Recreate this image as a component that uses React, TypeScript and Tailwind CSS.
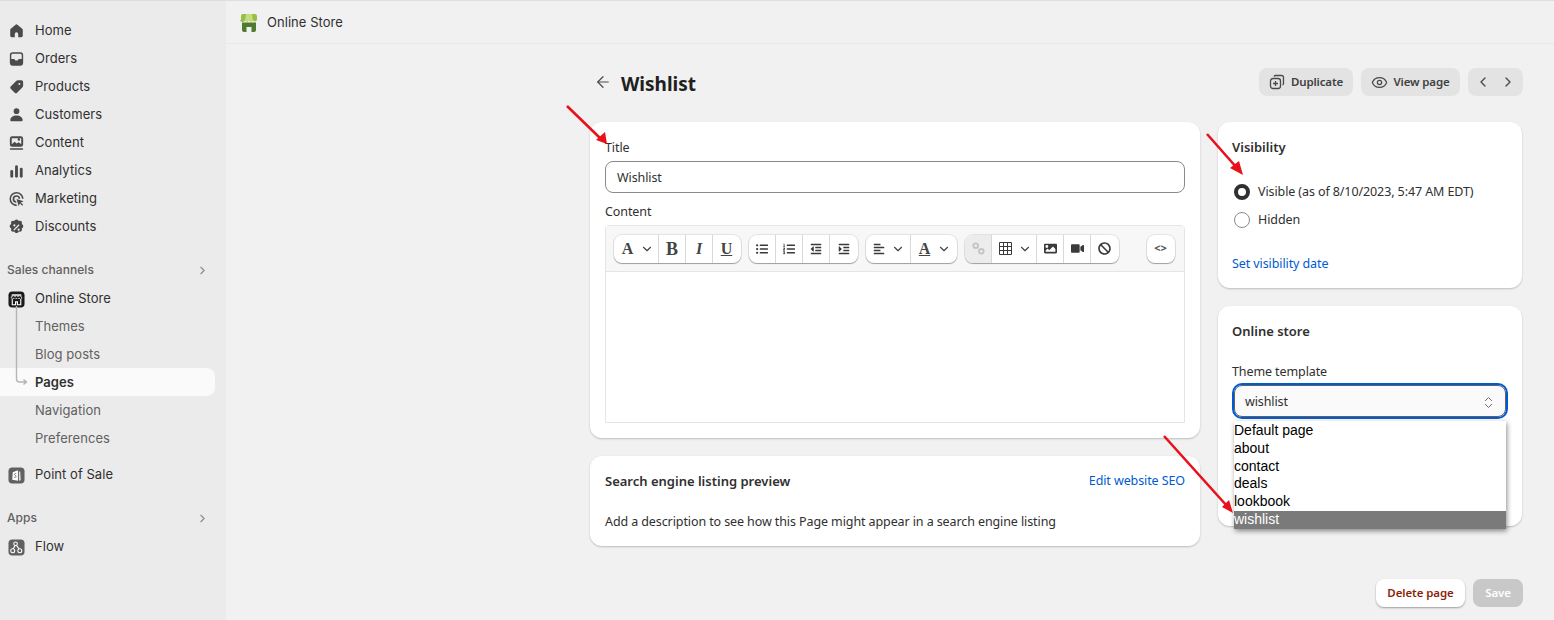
import type { ReactNode } from 'react';
import { ChevronRight, ChevronLeft, ArrowLeft, ChevronDown, ChevronsUpDown, Eye } from 'lucide-react';
import { FaListUl, FaListOl, FaOutdent, FaIndent, FaAlignLeft, FaImage, FaVideo, FaBan } from 'react-icons/fa';

// sidebar icons, 20x20 box
const icons: Record<string, ReactNode> = {
    Home: <path d="M9 3.400a1.600 1.600 0 0 1 2 0l5 4.200c.4.3.6.8.6 1.300v6.100a1.500 1.500 0 0 1-1.500 1.500h-3.300v-3.300a1.800 1.800 0 0 0-3.600 0v3.300h-3.300a1.500 1.500 0 0 1-1.500-1.500v-6.100c0-.5.2-1 .6-1.300z" />,
    Orders: <path fillRule="evenodd" d="M6 3h8a3 3 0 0 1 3 3v8a3 3 0 0 1-3 3h-8a3 3 0 0 1-3-3v-8a3 3 0 0 1 3-3zm-1.500 7h2.800c.5 0 .8.300 1 .7.200.6.800 1 1.700 1s1.500-.4 1.700-1c.2-.4.5-.7 1-.7h2.800v-4c0-.8-.7-1.500-1.500-1.500h-8c-.8 0-1.500.7-1.500 1.500z" />,
    Products: <path fillRule="evenodd" d="M11.500 3h3.700a1.800 1.800 0 0 1 1.800 1.800v3.700c0 .8-.3 1.500-.9 2.100l-5.500 5.500a1.800 1.800 0 0 1-2.500 0l-4.200-4.200a1.800 1.800 0 0 1 0-2.500l5.500-5.500c.6-.6 1.300-.9 2.100-.9zm1.500 4.800a1 1 0 1 0 0-2 1 1 0 0 0 0 2z" />,
    Customers: <><circle cx="10" cy="6" r="3" /><path d="M3.500 15.200c0-2.600 2.900-4.700 6.500-4.700s6.500 2.100 6.500 4.700c0 .8-.6 1.300-1.300 1.300h-10.400c-.7 0-1.300-.5-1.300-1.300z" /></>,
    Content: <><path fillRule="evenodd" d="M5.500 3h9a2.500 2.500 0 0 1 2.500 2.500v6a2.500 2.500 0 0 1-2.500 2.500h-9a2.500 2.500 0 0 1-2.500-2.500v-6a2.500 2.500 0 0 1 2.500-2.500zm-.5 8.200 3-2.400 2.200 1.800 2.100-1.500 2.700 2.100v-6.200h-10zm7.500-3.700a1.300 1.300 0 1 0 0-2.600 1.300 1.300 0 0 0 0 2.600z" /><rect x="3" y="15.500" width="14" height="1.500" rx=".7" /></>,
    Analytics: <><rect x="3.500" y="9" width="3" height="8" rx="1.500" /><rect x="8.500" y="4" width="3" height="13" rx="1.500" /><rect x="13.500" y="6.500" width="3" height="10.500" rx="1.500" /></>,
    Marketing: <><path d="M10 2.500a7.500 7.500 0 0 1 7.500 7.300h-1.700a5.800 5.800 0 1 0-5.600 6v1.700a7.500 7.500 0 1 1-.2-15z" /><path d="M10 6a4 4 0 0 1 4 3.800h-1.700a2.300 2.300 0 1 0-2.500 2.500v1.700a4 4 0 0 1 .2-8z" /><path d="M10 10l7.500 2.300-2.900 1.300 2.400 2.400-1 1-2.400-2.400-1.300 2.900z" /></>,
};

function NavIcon({ name }: { name: string }) {
    if (name === 'Discounts') {
        return (
            <svg viewBox="2 2 16 16" className="w-[17px] h-[17px]">
                <path className="fill-[#4a4a4a]" d="M8.600 3c.7-.8 2.100-.8 2.800 0l.8.800 1.100-.1c1-.1 1.900.8 1.800 1.800l-.1 1.100.8.800c.8.700.8 2.100 0 2.800l-.8.800.1 1.100c.1 1-.8 1.900-1.800 1.800l-1.100-.1-.8.800c-.7.800-2.100.8-2.800 0l-.8-.8-1.100.1c-1 .1-1.900-.8-1.800-1.800l.1-1.100-.8-.8c-.8-.7-.8-2.100 0-2.800l.8-.8-.1-1.100c-.1-1 .8-1.900 1.800-1.800l1.100.1z" />
                <path d="M12 7l.9.900-5 5-.9-.9z" fill="#ebebeb" />
                <circle cx="8" cy="8" r="1" fill="#ebebeb" />
                <circle cx="12" cy="12" r="1" fill="#ebebeb" />
            </svg>
        );
    }
    return (
        <svg viewBox="0 0 20 20" className="w-5 h-5 fill-[#4a4a4a]">{icons[name]}</svg>
    );
}

function StoreIcon() {
    return (
        <svg viewBox="0 0 18 18" className="w-[17px] h-[17px]">
            <rect x="0.500" y="0.500" width="17" height="17" rx="4" fill="#1a1a1a" />
            <path d="M4 3.500h10v1.500h-10z" fill="#fff" />
            <path d="M3.500 5.500h11v2.300h-11z" fill="none" stroke="#fff" strokeWidth="0.900" strokeDasharray="2 1" />
            <path d="M4.500 8.500v6h3.500v-3h2v3h3.500v-6" fill="none" stroke="#fff" strokeWidth="1.200" />
        </svg>
    );
}

function PosIcon() {
    return (
        <svg viewBox="0 0 18 18" className="w-[17px] h-[17px]">
            <rect x="0.500" y="0.500" width="17" height="17" rx="4" fill="#616161" />
            <path d="M5 5.500 10.500 3.500v11l-6-1z" fill="#fff" />
            <path d="M11.500 4.500l1.500 .5.500 9-2 .5z" fill="#ddd" />
            <path d="M8.700 7c-1.300-.4-2 .4-1.800 1.100.2.800 1.700.9 1.700 1.900 0 .8-1 1.200-2 .7" stroke="#616161" strokeWidth="0.900" fill="none" />
        </svg>
    );
}

function FlowIcon() {
    return (
        <svg viewBox="0 0 18 18" className="w-[17px] h-[17px]">
            <rect x="0.500" y="0.500" width="17" height="17" rx="4" fill="#616161" />
            <g fill="none" stroke="#fff" strokeWidth="1.100">
                <circle cx="8" cy="5" r="1.900" />
                <circle cx="5" cy="12.500" r="2.100" />
                <circle cx="12.500" cy="12.500" r="2.100" />
                <path d="M7.500 7 5.500 10.300M9 6.800l2.700 3.700" />
            </g>
        </svg>
    );
}

function NavRow({ label, icon }: { label: string; icon: ReactNode }) {
    return (
        <div className="h-7 pt-[2px] flex items-center pl-[7px] gap-[9px]">
            <span className="w-[19px] flex justify-center">{icon}</span>
            <span className="text-[#303030]">{label}</span>
        </div>
    );
}

function SectionLabel({ label }: { label: string }) {
    return (
        <div className="h-7 pt-[2px] flex items-center justify-between pl-[7px] pr-[6px] text-xs font-medium text-[#616161]">
            <span>{label}</span>
            <ChevronRight size={13} className="text-[#8a8a8a]" />
        </div>
    );
}

function Sidebar() {
    const main = ['Home', 'Orders', 'Products', 'Customers', 'Content', 'Analytics', 'Marketing', 'Discounts'];
    return (
        <aside className="w-[226px] shrink-0 h-full bg-[#ebebeb] border-t border-[#dedede] pt-[15px] pr-[11px] text-[13px] tracking-[0.05px] [font-family:Inter,sans-serif]">
            {main.map(m => <NavRow key={m} label={m} icon={<NavIcon name={m} />} />)}
            <div className="mt-[15px]"><SectionLabel label="Sales channels" /></div>
            <div className="relative mt-[1px]">
                <NavRow label="Online Store" icon={<StoreIcon />} />
                <div className="pl-[35px] text-[#616161]">
                    <div className="h-7 pt-[2px] flex items-center">Themes</div>
                    <div className="h-7 pt-[2px] flex items-center">Blog posts</div>
                    <div className="h-7 pt-[2px] flex items-center -ml-[35px] pl-[35px] bg-[#fafafa] rounded-r-lg font-semibold text-[#303030]">Pages</div>
                    <div className="h-7 pt-[2px] flex items-center">Navigation</div>
                    <div className="h-7 pt-[2px] flex items-center">Preferences</div>
                </div>
                {/* tree line */}
                <svg viewBox="0 0 20 80" className="absolute left-[8px] top-[22px] w-5 h-20 fill-none stroke-[#b5b5b5] stroke-[1.400]">
                    <path d="M8.500 0V73a3 3 0 0 0 3 3h7M15.500 73.500l3 2.500-3 2.500" />
                </svg>
            </div>
            <div className="mt-[8px]"><NavRow label="Point of Sale" icon={<PosIcon />} /></div>
            <div className="mt-[15px]"><SectionLabel label="Apps" /></div>
            <div className="mt-[1px]"><NavRow label="Flow" icon={<FlowIcon />} /></div>
        </aside>
    );
}

function Card({ children, className = '' }: { children: ReactNode; className?: string }) {
    return (
        <div className={`bg-white rounded-xl shadow-[0_1px_2px_rgba(0,0,0,0.22)] ${className}`}>{children}</div>
    );
}

function ToolBtn({ children, wide, muted }: { children: ReactNode; wide?: boolean; muted?: boolean }) {
    return (
        <div className={`h-full flex items-center border-r border-[#d8d8d8] last:border-r-0 ${wide ? 'w-[45px] gap-[6px] pl-[7px]' : 'w-[27px] justify-center'} ${muted ? 'bg-[#ececec]' : 'text-[#3a3a3a]'}`}>
            {children}
        </div>
    );
}

function ToolGroup({ children, className = '' }: { children: ReactNode; className?: string }) {
    return (
        <div className={`h-[28px] flex pr-px bg-white rounded-lg overflow-hidden shadow-[0_1px_1px_rgba(0,0,0,0.3),0_0_0_1px_rgba(0,0,0,0.08)] ${className}`}>{children}</div>
    );
}

const Caret = () => <ChevronDown size={14} className="text-[#444] shrink-0" />;

// the editor's serif letter buttons
function Letter({ children, className = '' }: { children: ReactNode; className?: string }) {
    return (
        <span className={`w-[13px] text-center text-[16px] leading-none font-bold text-[#444] [font-family:'Liberation_Serif',serif] ${className}`}>{children}</span>
    );
}

function Toolbar() {
    return (
        <div className="h-[46px] shrink-0 flex items-center gap-2 pl-[8px] pr-[9px] bg-[#f7f7f7] border-b border-[#e5e5e5]">
            <ToolGroup>
                <ToolBtn wide><Letter>A</Letter><Caret /></ToolBtn>
                <ToolBtn><Letter className="text-[18px]">B</Letter></ToolBtn>
                <ToolBtn><Letter className="italic">I</Letter></ToolBtn>
                <ToolBtn><Letter className="underline text-[15px]">U</Letter></ToolBtn>
            </ToolGroup>
            <ToolGroup>
                <ToolBtn><FaListUl size={12} /></ToolBtn>
                <ToolBtn><FaListOl size={12} /></ToolBtn>
                <ToolBtn><FaOutdent size={12} /></ToolBtn>
                <ToolBtn><FaIndent size={12} /></ToolBtn>
            </ToolGroup>
            <ToolGroup>
                <ToolBtn wide><FaAlignLeft size={12} className="shrink-0" /><Caret /></ToolBtn>
                <ToolBtn wide><Letter className="underline text-[14px]">A</Letter><Caret /></ToolBtn>
            </ToolGroup>
            <ToolGroup>
                <ToolBtn muted>
                    <svg viewBox="0 0 14 14" className="w-[13px] h-[13px] fill-none stroke-[#c4c4c4] stroke-2">
                        <circle cx="4" cy="4" r="2.500" />
                        <circle cx="10" cy="10" r="2.500" />
                    </svg>
                </ToolBtn>
                <ToolBtn wide>
                    <svg viewBox="0 0 13 13" className="w-[13px] h-[13px] shrink-0 fill-none stroke-[#3a3a3a]">
                        <path d="M.5.5h12v12h-12zM.5 4.500h12M.5 8.500h12M4.500.5v12M8.500.5v12" />
                    </svg>
                    <Caret />
                </ToolBtn>
                <ToolBtn><FaImage size={13} /></ToolBtn>
                <ToolBtn><FaVideo size={13} /></ToolBtn>
                <ToolBtn><FaBan size={13} /></ToolBtn>
            </ToolGroup>
            <ToolGroup className="ml-auto">
                <div className="w-[27px] flex items-center justify-center text-[11px] font-bold text-[#555]">{'<>'}</div>
            </ToolGroup>
        </div>
    );
}

function Radio({ checked, label }: { checked?: boolean; label: string }) {
    return (
        <div className="h-7 pt-[2px] flex items-center gap-2 pl-[2px]">
            {checked
                ? <span className="w-4 h-4 rounded-full border-[4.5px] border-[#303030] bg-white" />
                : <span className="w-4 h-4 rounded-full border border-[#8a8a8a] bg-white" />}
            <span>{label}</span>
        </div>
    );
}

const options = ['Default page', 'about', 'contact', 'deals', 'lookbook', 'wishlist'];

function Content() {
    return (
        <main className="flex-1 min-w-0 h-full flex flex-col bg-[#f1f1f1] text-[12.5px] tracking-[-0.1px] text-[#303030] [font-family:'Noto_Sans',sans-serif]">
            <header className="h-[44px] shrink-0 flex items-center gap-[9px] pt-[2px] pl-[14px] border-t border-t-[#dedede] border-b border-b-[#e8e8e8] text-[13px] tracking-[0.05px] [font-family:Inter,sans-serif]">
                <svg viewBox="0 0 18 20" className="w-[18px] h-5">
                    <path d="M1 7V3a2 2 0 0 1 2-2h12a2 2 0 0 1 2 2v4a2.700 2.700 0 0 1-4 .6 2.700 2.700 0 0 1-4 0 2.700 2.700 0 0 1-4 0 2.700 2.700 0 0 1-5-.6z" fill="#95bf47" />
                    <path d="M6 1h6l1 7h-8z" fill="#c3de7c" />
                    <path d="M2 9.500h14V17a2 2 0 0 1-2 2h-2.500v-5h-5v5H4a2 2 0 0 1-2-2z" fill="#4f7a2f" />
                </svg>
                <span>Online Store</span>
            </header>

            <div className="flex-1 pl-[364px] pr-[31px] pt-6">
                <div className="h-7 flex items-center justify-between">
                    <div className="flex items-center gap-[9px] pl-[4px]">
                        <ArrowLeft size={18} className="text-[#4a4a4a]" strokeWidth={1.6} />
                        <h1 className="mt-[4px] text-[19px] tracking-normal font-bold text-[#202020]">Wishlist</h1>
                    </div>
                    <div className="flex gap-2 text-[11.5px] tracking-[-0.15px] font-semibold text-[#404040]">
                        <div className="w-[94px] h-7 rounded-lg bg-[#e3e3e3] flex items-center justify-center gap-[6px]">
                            <svg viewBox="0 0 16 16" className="w-4 h-4 fill-none stroke-[#4a4a4a] stroke-[1.300]">
                                <rect x="1.500" y="4.500" width="10" height="10" rx="2.500" />
                                <path d="M5 2.500c.3-.7 1-1 1.500-1h6a2 2 0 0 1 2 2v6c0 .6-.3 1.200-1 1.500M6.500 7v5M4 9.500h5" />
                            </svg>
                            Duplicate
                        </div>
                        <div className="w-[99px] h-7 rounded-lg bg-[#e3e3e3] flex items-center justify-center gap-[5px]">
                            <Eye size={17} className="text-[#4a4a4a]" strokeWidth={1.8} />
                            View page
                        </div>
                        <div className="w-[55px] h-7 rounded-lg bg-[#e3e3e3] flex items-center justify-around px-[2px] text-[#4a4a4a]">
                            <ChevronLeft size={16} />
                            <ChevronRight size={16} />
                        </div>
                    </div>
                </div>

                <div className="mt-[26px] grid grid-cols-[610px_304px] gap-[18px] items-start">
                    <div className="flex flex-col gap-[18px]">
                        <Card className="px-[15px] pt-4 pb-[15px]">
                            <label className="block h-[18px] leading-[20px]">Title</label>
                            <div className="mt-[5px] h-8 pt-[2px] rounded-lg border border-[#8a8a8a] flex items-center px-[11px]">Wishlist</div>
                            <label className="block mt-[9px] h-[18px] leading-[20px]">Content</label>
                            <div className="mt-[5px] h-[198px] border border-[#e5e5e5] rounded-t flex flex-col">
                                <Toolbar />
                            </div>
                        </Card>
                        <Card className="px-[15px] pt-4 pb-4">
                            <div className="flex justify-between leading-[18px]">
                                <span className="font-semibold text-[13px] tracking-normal">Search engine listing preview</span>
                                <span className="text-[#005bd3]">Edit website SEO</span>
                            </div>
                            <p className="mt-[22px] h-[18px] leading-[20px]">Add a description to see how this Page might appear in a search engine listing</p>
                        </Card>
                    </div>

                    <div className="flex flex-col gap-[18px]">
                        <Card className="px-[14px] pt-4 pb-4">
                            <div className="font-semibold text-[13px] tracking-normal leading-[18px]">Visibility</div>
                            <div className="mt-[21px]">
                                <Radio checked label="Visible (as of 8/10/2023, 5:47 AM EDT)" />
                                <Radio label="Hidden" />
                            </div>
                            <div className="mt-[21px] h-[18px] leading-[20px] text-[#005bd3]">Set visibility date</div>
                        </Card>
                        <Card className="relative h-[220px] px-[14px] pt-4">
                            <div className="font-semibold text-[13px] tracking-normal leading-[18px]">Online store</div>
                            <div className="mt-[22px] h-[18px] leading-[20px]">Theme template</div>
                            <div className="mt-[5px] mx-[2px] h-[32px] pt-[2px] rounded-lg bg-[#fafafa] border border-[#616161] outline-2 outline-offset-[0px] outline-[#005bd3] flex items-center justify-between pl-[10px] pr-[9px]">
                                wishlist
                                <ChevronsUpDown size={15} className="text-[#616161]" strokeWidth={1.5} />
                            </div>
                            {/* native select list, opened */}
                            <ul className="absolute left-4 top-[115px] w-[272px] h-[108px] pt-px flex flex-col bg-white shadow-[1px_2px_5px_rgba(0,0,0,0.45)] text-sm tracking-normal leading-[17.8px] text-black [font-family:'Liberation_Sans',sans-serif]">
                                {options.map(o => (
                                    <li key={o} className={o === 'wishlist' ? 'flex-1 bg-[#7a7a7a] text-white' : 'h-[17.8px]'}>{o}</li>
                                ))}
                            </ul>
                        </Card>
                    </div>
                </div>

                <div className="mt-[33px] flex justify-end gap-2 text-[11.5px] font-semibold">
                    <div className="w-[89px] h-7 rounded-lg bg-white text-[#8e1f0b] shadow-[0_1px_2px_rgba(0,0,0,0.35)] flex items-center justify-center">Delete page</div>
                    <div className="w-[50px] h-7 rounded-lg bg-[#c8c8c8] text-white flex items-center justify-center">Save</div>
                </div>
            </div>
        </main>
    );
}

export default function App() {
    return (
        <div className="relative w-full h-[620px] overflow-hidden flex">
            <Sidebar />
            <Content />
            {/* review arrows pasted on top of the screenshot */}
            <svg viewBox="0 0 1554 620" className="absolute inset-0 w-[1554px] h-[620px] pointer-events-none">
                <g stroke="#e8101a" strokeWidth="2.600" fill="none">
                    <path d="M567 106 600 138" />
                    <path d="M1207 134 1237 168" />
                    <path d="M1164 436 1227 506" />
                </g>
                <g fill="#e8101a">
                    <path d="M607 144 596 140 605 132z" />
                    <path d="M1243 175 1230 168 1239 161z" />
                    <path d="M1233 513 1222 507 1229 500z" />
                </g>
            </svg>
        </div>
    );
}
